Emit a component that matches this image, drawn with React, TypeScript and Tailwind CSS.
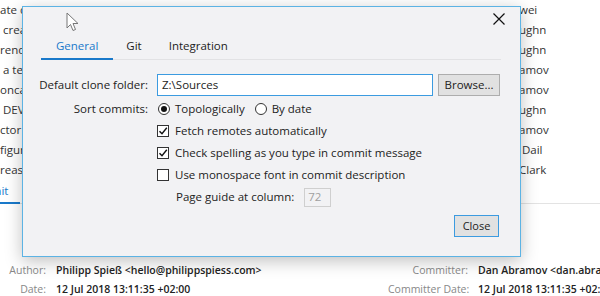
import React from "react";

const leftRows = ["ate d  Evaluate derived state in the commit phase (#13129)", " crea", "rend", " a tes", "onca", " DEV", "ctor", "figur", "rease"];
const rightRows = ["wei", "ughn", "ughn", "amov", "amov", "ughn", "amov", " Dail", "Clark"];

const Check = () => (
  <span className="flex h-[12px] w-[12px] items-center justify-center border border-[#333] bg-white">
    <svg width="10" height="10" viewBox="0 0 10 10">
      <path d="M1.5 5.2 L4 7.8 L8.8 1.8" fill="none" stroke="#111" strokeWidth="1.4" />
    </svg>
  </span>
);

const Box = () => <span className="h-[12px] w-[12px] border border-[#333] bg-white" />;

const Radio = ({ on }: { on?: boolean }) => (
  <span className="flex h-[12px] w-[12px] items-center justify-center rounded-full border border-[#333] bg-white">
    {on && <span className="h-[6px] w-[6px] rounded-full bg-[#111]" />}
  </span>
);

const Cursor = () => (
  <svg className="absolute left-[66px] top-[12px]" width="14" height="20" viewBox="0 0 14 20">
    <path d="M1 1 L1 16 L4.5 12.5 L7 18.5 L9.5 17.5 L7 11.5 L12 11.5 Z" fill="#fff" stroke="#777" strokeWidth="1" strokeLinejoin="round" />
  </svg>
);

export default function App() {
  return (
    <div className="relative h-[296px] w-[600px] overflow-hidden bg-white text-[11px] text-[#222]" style={{ fontFamily: '"Segoe UI", "Open Sans", "Noto Sans", sans-serif' }}>
      {/* commit list behind the dialog */}
      <div className="flex">
        <div className="flex w-[519px] shrink-0 flex-col overflow-hidden">
          {leftRows.map((t, i) => (
            <div key={i} className="flex h-[20px] items-center whitespace-pre text-[11.5px] text-[#333]">{t}</div>
          ))}
        </div>
        <div className="flex flex-col">
          {rightRows.map((t, i) => (
            <div key={i} className="flex h-[20px] items-center whitespace-pre text-[11.5px] text-[#333]">{t}</div>
          ))}
        </div>
      </div>
      <div className="flex h-[24px] border-b border-[#e3e3e3]">
        <div className="-mb-px -ml-[34px] flex items-center border-b-2 border-[#1979ca] pr-[12px] text-[11.5px] text-[#1979ca]">Commit</div>
      </div>
      <div className="mt-[59px] flex text-[10.5px]">
        <div className="grid w-[388px] shrink-0 grid-cols-[46px_1fr] gap-x-[10px] gap-y-[3px]">
          <span className="text-right text-[#888]">Author:</span>
          <span className="font-semibold text-[#222]">Philipp Spieß &lt;hello@philippspiess.com&gt;</span>
          <span className="text-right text-[#888]">Date:</span>
          <span className="font-semibold text-[#222]">12 Jul 2018 13:11:35 +02:00</span>
        </div>
        <div className="grid shrink-0 grid-cols-[80px_1fr] gap-x-[10px] gap-y-[3px] whitespace-nowrap">
          <span className="text-right text-[#888]">Committer:</span>
          <span className="font-semibold text-[#222]">Dan Abramov &lt;dan.abramov@gmail.com&gt;</span>
          <span className="text-right text-[#888]">Committer Date:</span>
          <span className="font-semibold text-[#222]">12 Jul 2018 13:11:35 +02:00</span>
        </div>
      </div>

      {/* settings dialog */}
      <div className="absolute left-[22px] top-[6px] flex h-[251px] w-[499px] flex-col border border-[#5cb3e4] bg-[#f2f2f4] shadow-[0_4px_16px_rgba(0,0,0,0.25)]">
        <div className="flex h-[26px] justify-end pr-[15px] pt-[6px]">
          <svg width="12" height="12" viewBox="0 0 12 12">
            <path d="M0.5 0.5 L11.5 11.5 M11.5 0.5 L0.5 11.5" stroke="#111" strokeWidth="1.2" />
          </svg>
        </div>
        <div className="ml-[18px] mr-[19px] flex h-[27px] border-b border-[#e2e2e4] text-[11.5px]">
          <div className="-mb-px flex items-center border-b-2 border-[#1979ca] px-[15px] text-[#1979ca]">General</div>
          <div className="flex items-center px-[13px]">Git</div>
          <div className="flex items-center px-[14px]">Integration</div>
        </div>
        <div className="mt-[13px] flex flex-col text-[11.5px]">
          <div className="flex h-[23px] items-center">
            <span className="w-[125px] text-right">Default clone folder:</span>
            <div className="ml-[9px] flex h-[22px] w-[276px] items-center border border-[#3c9be0] bg-white px-[4px]">Z:\Sources</div>
            <button className="ml-[5px] flex h-[22px] w-[62px] items-center justify-center border border-[#adadad] bg-[#e1e1e1]">Browse...</button>
          </div>
          <div className="mt-[2px] flex h-[22px] items-center">
            <span className="w-[125px] text-right">Sort commits:</span>
            <span className="ml-[10px]"><Radio on /></span>
            <span className="ml-[5px]">Topologically</span>
            <span className="ml-[10px]"><Radio /></span>
            <span className="ml-[5px]">By date</span>
          </div>
          <div className="flex h-[22px] items-center pl-[134px]">
            <Check />
            <span className="ml-[6px]">Fetch remotes automatically</span>
          </div>
          <div className="flex h-[22px] items-center pl-[134px]">
            <Check />
            <span className="ml-[6px]">Check spelling as you type in commit message</span>
          </div>
          <div className="flex h-[22px] items-center pl-[134px]">
            <Box />
            <span className="ml-[6px]">Use monospace font in commit description</span>
          </div>
          <div className="flex h-[22px] items-center pl-[153px]">
            <span>Page guide at column:</span>
            <div className="ml-[10px] flex h-[19px] w-[27px] items-center border border-[#cfcfcf] px-[3px] text-[#a0a0a0]">72</div>
          </div>
        </div>
        <div className="mt-[7px] flex justify-end pr-[21px]">
          <button className="flex h-[22px] w-[45px] items-center justify-center border border-[#3c9be0] bg-[#e1e1e1]">Close</button>
        </div>
      </div>
      <Cursor />
    </div>
  );
}
